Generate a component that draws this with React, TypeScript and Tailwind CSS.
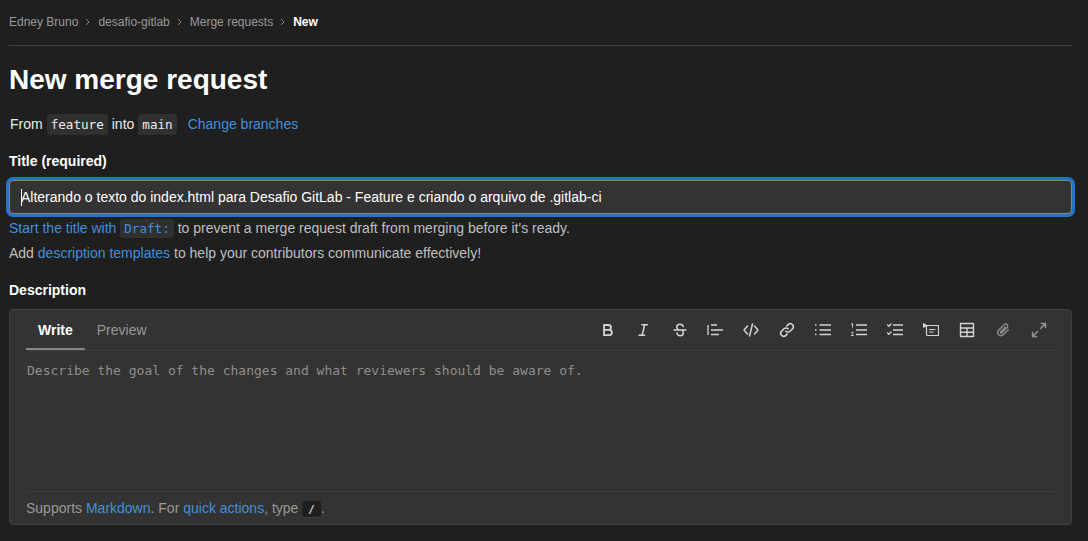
const sans = "font-['Liberation_Sans',Arial,sans-serif]";
const mono = "font-['DejaVu_Sans_Mono',monospace]";

function Sep() {
  return (
    <svg viewBox="0 0 8 8" className="ml-[5px] mr-[7px] h-2 w-2 text-[#8a8a8a]" fill="none" stroke="currentColor" strokeWidth="1">
      <path d="M3 1 6 4 3 7" />
    </svg>
  );
}

function Code({ children, className = "" }: { children: React.ReactNode; className?: string }) {
  return (
    <code className={`${mono} rounded-[3px] bg-[#303030] px-1 py-[2px] text-[12.6px] leading-[17px] ${className}`}>
      {children}
    </code>
  );
}

function Icon({ children }: { children: React.ReactNode }) {
  return (
    <svg viewBox="0 0 16 16" className="h-4 w-4 text-[#d4d4d4]" fill="none" stroke="currentColor" strokeWidth="1.5" strokeLinecap="round" strokeLinejoin="round">
      {children}
    </svg>
  );
}

const icons = [
  <path key="b" strokeWidth="1.800" d="M5 3h4.500a2.400 2.400 0 0 1 0 4.800H5zm0 4.800h5.200a2.700 2.700 0 0 1 0 5.400H5z" />,
  <path key="i" d="M7 2.800h5.500M4 13.200h5.500M9.700 2.800l-2.600 10.400" />,
  <path key="s" d="M3 8h12M12.300 4.600C12 3.300 10.700 2.200 9 2.200 7 2.200 5.700 3.400 5.700 5c0 1.300.8 2.200 2 3M6 11c.2 1.600 1.500 2.800 3.100 2.800 1.900 0 3.200-1.200 3.200-2.800 0-1.200-.5-2.200-1.500-3" />,
  <path key="q" strokeLinecap="butt" strokeWidth="1.300" d="M1 3v10M4 3h6M4 8h12M4 12.500h8" />,
  <path key="c" d="M4.500 4 1 8l3.500 4M11.500 4 15 8l-3.500 4M9.500 2 6.500 14" />,
  <path key="l" d="M6.800 9.200a3 3 0 0 0 4.300 0l2.300-2.300a3 3 0 0 0-4.300-4.300L7.800 3.900M9.200 6.800a3 3 0 0 0-4.300 0L2.600 9.100a3 3 0 0 0 4.300 4.300l1.300-1.300" />,
  <path key="ul" strokeLinecap="butt" strokeWidth="1.300" d="M4.500 3H16M4.500 8H16M4.500 12.500H16M0 3h1.500M0 8h1.500M0 12.500h1.500" />,
  <g key="ol">
    <path strokeLinecap="butt" strokeWidth="1.300" d="M5 3h11M5 8h11M5 12.500h11" />
    <path strokeWidth="1" d="M0.500 2l1-.6V5M.3 10.500c.3-.5 1.900-.6 1.900.4 0 .8-1.900 1.400-1.900 2.600h2" />
  </g>,
  <g key="task">
    <path strokeLinecap="butt" strokeWidth="1.300" d="M6 3h10M6 8h10M6 12.500h10" />
    <path strokeWidth="1.300" d="M.5 3l1.300 1.300L4 2M.5 11l1.300 1.300L4 10" />
  </g>,
  <g key="collapse">
    <path strokeWidth="1.200" d="M3.500 3.500h12v10h-11a1 1 0 0 1-1-1zM6.500 7.500h5.500M6.500 10h3.500" />
    <path fill="currentColor" stroke="none" d="M0 1v5l5-2.500z" />
  </g>,
  <g key="table">
    <path strokeLinecap="butt" strokeWidth="1.400" d="M1.500 1.500h13v13h-13zM1.500 6h13M1.500 10.200h13M8 6v8.500" />
  </g>,
  <path key="clip" className="text-[#949494]" strokeWidth="1.300" d="M13.400 7.600 8.200 12.800a3.200 3.200 0 0 1-4.600-4.500l5.700-5.700a2 2 0 0 1 2.900 2.900L6.900 10.800a.8.800 0 0 1-1.200-1.100l4.700-4.800" />,
  <path key="full" className="text-[#949494]" d="M9.500 6.500 14.500 1.500M10.500 1.500h4v4M6.500 9.500l-5 5M1.500 10.500v4h4" />,
];

export default function App() {
  return (
    <div className={`${sans} min-h-[541px] bg-[#1f1f1f] pl-[9px] pr-4 text-sm text-[#ececec]`}>
      <nav className="flex h-[46px] items-center border-b border-[#404040] pb-[2px] text-xs text-[#999]">
        <span>Edney Bruno</span>
        <Sep />
        <span>desafio-gitlab</span>
        <Sep />
        <span>Merge requests</span>
        <Sep />
        <span className="font-bold text-white">New</span>
      </nav>

      <h1 className="mt-[16px] text-[28px] font-bold leading-[36px] text-white">New merge request</h1>

      <p className="mt-[14px] flex h-6 items-center pl-px leading-5">
        From <Code className="ml-[4px] mr-[4px]">feature</Code>into
        <Code className="ml-[4px]">main</Code>
        <a className="ml-[11px] text-[#428fdc]">Change branches</a>
      </p>

      <label className="mt-[15px] block font-bold leading-[20px] text-white">Title (required)</label>

      <div className="mt-[9px] flex h-[34px] items-center rounded-[4px] border border-[#868686] bg-[#333] pl-[11px] text-white shadow-[0_0_0_3px_#1f75cb]">
        <span className="-mr-px h-[17px] w-px bg-white" />
        Alterando o texto do index.html para Desafio GitLab - Feature e criando o arquivo de .gitlab-ci
      </div>

      <p className="mt-[2px] leading-[24px] text-[#bfbfbf]">
        <a className="text-[#428fdc]">Start the title with</a>{" "}
        <Code className="text-[#428fdc]">Draft:</Code> to prevent a merge request draft from merging before it's ready.
      </p>
      <p className="mt-px leading-[24px] text-[#bfbfbf]">
        Add <a className="text-[#428fdc]">description templates</a> to help your contributors communicate effectively!
      </p>

      <label className="mt-[15px] block font-bold leading-[20px] text-white">Description</label>

      <div className="mt-[9px] rounded-[4px] border border-[#404040] bg-[#333] px-4">
        <div className="flex h-[41px] items-center justify-between border-b border-[#404040]">
          <div className="flex h-full">
            <span className="flex items-center border-b-2 border-[#868686] px-3 pt-[2px] font-bold text-white">Write</span>
            <span className="flex items-center px-3 text-[#999]">Preview</span>
          </div>
          <div className="flex gap-5 pr-2">
            {icons.map((icon, i) => (
              <Icon key={i}>{icon}</Icon>
            ))}
          </div>
        </div>
        <div className="h-[140px] pt-[11px] pl-px font-['DejaVu_Sans_Mono',monospace] text-[13px] leading-[17px] text-[#8f8f8f]">
          Describe the goal of the changes and what reviewers should be aware of.
        </div>
        <div className="flex h-[33px] items-center border-t border-[#404040] text-[#999]">
          <span>
            Supports <a className="text-[#428fdc]">Markdown</a>. For <a className="text-[#428fdc]">quick actions</a>, type{" "}
            <kbd className={`${mono} rounded-[3px] bg-[#1f1f1f] px-[6px] py-[2px] text-[11px] text-[#ececec] shadow-[inset_0_-1px_0_#404040]`}>/</kbd>.
          </span>
        </div>
      </div>
    </div>
  );
}
